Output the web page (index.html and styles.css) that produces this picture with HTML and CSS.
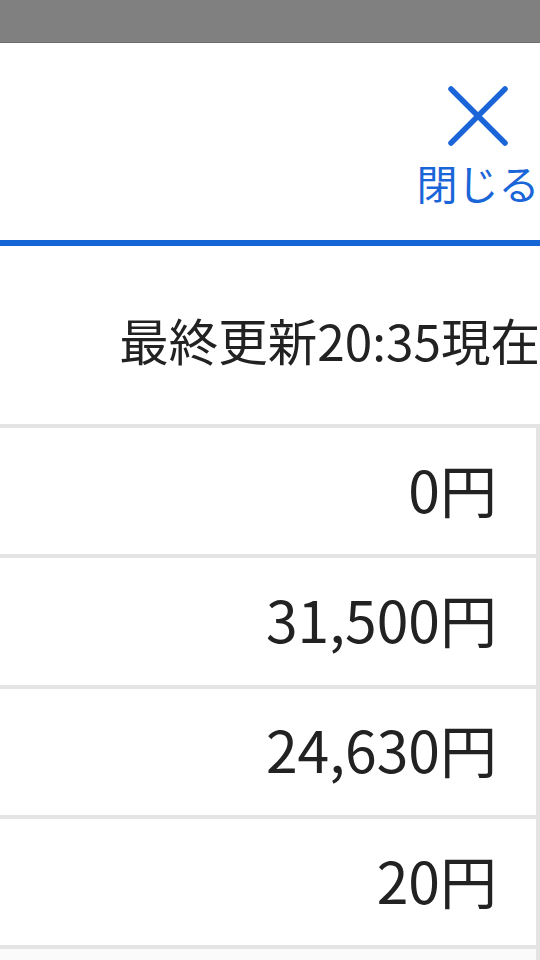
FILE: index.html
```html
<!DOCTYPE html>
<html lang="ja">
<head>
<meta charset="utf-8">
<title>最終更新</title>
<link rel="stylesheet" href="styles.css">
</head>
<body>
<div class="statusbar"></div>
<header class="header">
  <button class="close" type="button">
    <svg class="close-icon" viewBox="0 0 62 62" width="62" height="62" aria-hidden="true">
      <path d="M4 4 L58 58 M58 4 L4 58" fill="none" stroke="#1a66d8" stroke-width="5.5" stroke-linecap="round"/>
    </svg>
    <span class="close-label">閉じる</span>
  </button>
</header>
<main class="content">
  <p class="updated">最終更新20:35現在</p>
  <div class="table">
    <div class="row"><span class="amount">0円</span></div>
    <div class="row"><span class="amount">31,500円</span></div>
    <div class="row"><span class="amount">24,630円</span></div>
    <div class="row"><span class="amount">20円</span></div>
    <div class="row row-last"></div>
  </div>
</main>
</body>
</html>
```
FILE: styles.css
```css
html, body {
  margin: 0;
  padding: 0;
}
body {
  width: 540px;
  height: 960px;
  overflow: hidden;
  background: #ffffff;
  font-family: "Noto Sans CJK JP", "Noto Sans", sans-serif;
  color: #222222;
}
.statusbar {
  height: 42px;
  background: #808080;
  border-bottom: 1px solid #6c6c6c;
}
.header {
  height: 197px;
  display: flex;
  justify-content: flex-end;
  border-bottom: 6px solid #1565d6;
  box-sizing: content-box;
}
.close {
  display: flex;
  flex-direction: column;
  align-items: center;
  width: 122px;
  margin: 0 1px 0 0;
  padding: 42px 0 0 0;
  background: none;
  border: 0;
  font-family: inherit;
}
.close-icon {
  display: block;
  width: 62px;
  height: 62px;
}
.close-label {
  display: block;
  margin-top: 15px;
  font-size: 41px;
  line-height: 1;
  color: #1a66d8;
  white-space: nowrap;
}
.content {
  display: flex;
  flex-direction: column;
}
.updated {
  margin: 69px 0 0 0;
  font-size: 49.5px;
  line-height: 1;
  height: 50px;
  text-align: right;
  white-space: nowrap;
  color: #222222;
}
.table {
  margin-top: 59px;
}
.row {
  height: 130.3px;
  box-sizing: border-box;
  display: flex;
  align-items: center;
  justify-content: flex-end;
  padding-right: 39px;
  padding-bottom: 6px;
  border-top: 4px solid #e4e4e4;
  border-right: 4px solid #e4e4e4;
  background: #ffffff;
}
.row-last {
  background: #fafafa;
}
.amount {
  font-size: 57px;
  line-height: 1;
  white-space: nowrap;
  color: #222222;
}
```
